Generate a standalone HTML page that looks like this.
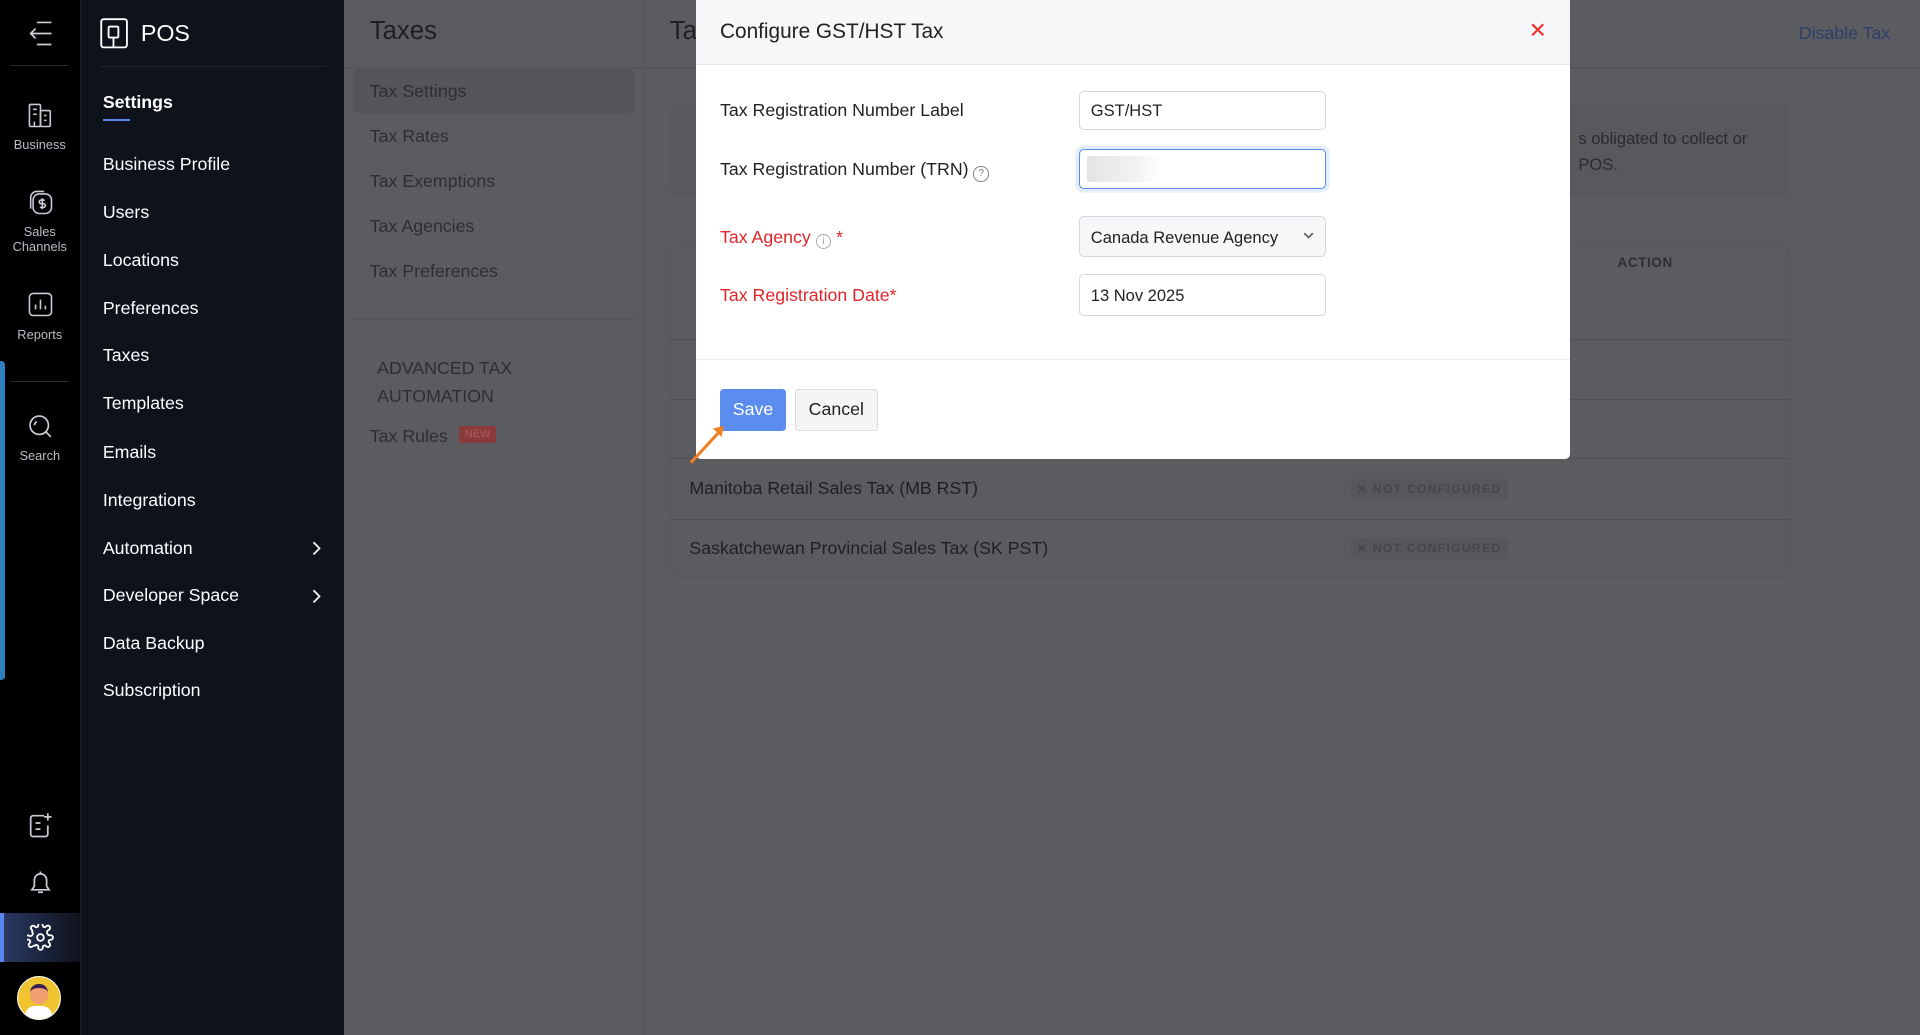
<!DOCTYPE html>
<html><head><meta charset="utf-8">
<style>
html,body{margin:0;padding:0;width:1920px;height:1035px;overflow:hidden;background:#5b5c60;font-family:"Liberation Sans",sans-serif;}
#w{position:absolute;left:0;top:0;width:1568px;height:845px;zoom:1.22449;overflow:hidden;}
.a{position:absolute;}
.rail{left:0;top:0;width:65px;height:845px;background:#000;border-right:1px solid #1b1f28;}
.rail .lbl{position:absolute;width:65px;text-align:center;color:#b8bcc8;font-size:10.5px;line-height:12px;}
.side{left:66px;top:0;width:215px;height:845px;background:#0e121b;}
.side .it{position:absolute;left:18px;color:#fff;font-size:14.5px;}
.main{left:281px;top:0;width:1287px;height:845px;background:#5b5c60;}
.sub{color:#2d2e33;font-size:14.5px;position:absolute;left:21px;}
.modal{left:568px;top:0;width:714px;height:375px;background:#fff;border-radius:0 0 4px 4px;}
.lab{position:absolute;left:20px;font-size:14.5px;color:#222;}
.red{color:#e0252b;}
.inp{position:absolute;left:313px;width:202px;height:32px;border:1px solid #d6d6de;border-radius:4px;box-sizing:border-box;font-size:13.5px;color:#222;padding:8px 9px;}
.row{position:absolute;left:266px;width:915px;height:1px;background:#4f5054;}
.rt{position:absolute;left:282px;font-size:14.5px;color:#1e1f24;}
.nc{position:absolute;left:822px;font-size:10px;font-weight:bold;letter-spacing:1px;color:#45464b;background:#56575b;padding:3px 5px;border-radius:3px;}
</style></head><body><div id="w">
<div class="a rail">
  <svg class="a" style="left:22px;top:16px" width="22" height="22" viewBox="0 0 22 22" fill="none" stroke="#c8ccd6" stroke-width="1.4"><path d="M8 2h12M8 20h12M3 11h17M7 7l-4 4 4 4"/></svg>
  <div class="a" style="left:8px;top:53px;width:48px;height:1px;background:#262a33"></div>
  <svg class="a" style="left:22px;top:83px" width="22" height="22" viewBox="0 0 22 22" fill="none" stroke="#c8ccd6" stroke-width="1.3"><rect x="2" y="2" width="9" height="18" rx="1"/><rect x="11" y="7" width="8" height="13" rx="1"/><path d="M5 6h3M5 10h3M14 11h2M14 15h2M6 20v-4"/></svg>
  <div class="lbl" style="top:113px">Business</div>
  <svg class="a" style="left:22px;top:154px" width="22" height="22" viewBox="0 0 22 22" fill="none" stroke="#c8ccd6" stroke-width="1.3"><rect x="5" y="4" width="15" height="16" rx="5"/><path d="M3 16V7a5 5 0 0 1 5-5h6"/><path d="M14.5 9h-3a1.5 1.5 0 0 0 0 3h2a1.5 1.5 0 0 1 0 3h-3M12.5 7.5v9"/></svg>
  <div class="lbl" style="top:184px">Sales<br>Channels</div>
  <svg class="a" style="left:22px;top:238px" width="22" height="22" viewBox="0 0 22 22" fill="none" stroke="#c8ccd6" stroke-width="1.3"><rect x="2" y="2" width="18" height="18" rx="3"/><path d="M7 15v-4M11 15V7M15 15v-3"/></svg>
  <div class="lbl" style="top:268px">Reports</div>
  <div class="a" style="left:8px;top:311px;width:48px;height:1px;background:#262a33"></div>
  <div class="a" style="left:0;top:295px;width:4px;height:260px;background:#2d7fc0;border-radius:0 3px 3px 0"></div>
  <svg class="a" style="left:22px;top:337px" width="22" height="22" viewBox="0 0 22 22" fill="none" stroke="#c8ccd6" stroke-width="1.4"><circle cx="10" cy="10" r="7.5"/><path d="M15.5 15.5l4 4M6 10a4 4 0 0 1 2-3"/></svg>
  <div class="lbl" style="top:367px">Search</div>
  <svg class="a" style="left:22px;top:663px" width="22" height="22" viewBox="0 0 22 22" fill="none" stroke="#c8ccd6" stroke-width="1.4"><path d="M14 3H5a2 2 0 0 0-2 2v13a2 2 0 0 0 2 2h10a2 2 0 0 0 2-2v-7M7 9h4M7 14h4M17 1v6M14 4h6"/></svg>
  <svg class="a" style="left:22px;top:710px" width="22" height="22" viewBox="0 0 22 22" fill="none" stroke="#c8ccd6" stroke-width="1.4"><path d="M4 17h14l-2-3V9a5 5 0 0 0-10 0v5zM11 2v2M9 19h4"/></svg>
  <div class="a" style="left:0;top:746px;width:65px;height:40px;background:linear-gradient(90deg,#2c3a66,#0e121b)"></div>
  <div class="a" style="left:0;top:746px;width:3px;height:40px;background:#5a84ee"></div>
  <svg class="a" style="left:22px;top:755px" width="22" height="22" viewBox="0 0 24 24" fill="none" stroke="#fff" stroke-width="1.6"><circle cx="12" cy="12" r="3"/><path d="M19.4 15a1.7 1.7 0 0 0 .3 1.8l.1.1a2 2 0 1 1-2.8 2.8l-.1-.1a1.7 1.7 0 0 0-2.9 1.2V21a2 2 0 1 1-4 0v-.1A1.7 1.7 0 0 0 7 19.4a1.7 1.7 0 0 0-1.8.3l-.1.1a2 2 0 1 1-2.8-2.8l.1-.1A1.7 1.7 0 0 0 1.2 14H1a2 2 0 1 1 0-4h.1A1.7 1.7 0 0 0 4.6 7a1.7 1.7 0 0 0-.3-1.8l-.1-.1a2 2 0 1 1 2.8-2.8l.1.1A1.7 1.7 0 0 0 10 1.2V1a2 2 0 1 1 4 0v.1a1.7 1.7 0 0 0 2.9 1.2l.1-.1a2 2 0 1 1 2.8 2.8l-.1.1A1.7 1.7 0 0 0 21 10h.1a2 2 0 1 1 0 4H21a1.7 1.7 0 0 0-1.6 1z"/></svg>
  <div class="a" style="left:14px;top:797px;width:36px;height:36px;border-radius:50%;background:#f0c330;border:1.5px solid #fff;box-sizing:border-box;overflow:hidden">
    <div class="a" style="left:10px;top:6px;width:14px;height:16px;border-radius:7px;background:#f0a070;border-top:4px solid #3a2050;box-sizing:border-box"></div>
    <div class="a" style="left:6px;top:24px;width:22px;height:14px;border-radius:8px 8px 0 0;background:#fff"></div>
  </div>
</div>
<div class="a side">
  <svg class="a" style="left:16px;top:15px" width="25" height="25" viewBox="0 0 25 25" fill="none" stroke="#fff" stroke-width="1.5"><rect x="1" y="1" width="21" height="23" rx="2"/><rect x="7" y="7" width="8" height="9" rx="1"/><path d="M11 16v8"/></svg>
  <div class="a" style="left:49px;top:16px;color:#fff;font-size:19px">POS</div>
  <div class="a" style="left:16px;top:54px;width:184px;height:1px;background:#1f2430"></div>
  <div class="it" style="top:75px;font-weight:bold">Settings</div>
  <div class="a" style="left:18px;top:97px;width:22px;height:2px;background:#5a84ee"></div>
  <div class="it" style="top:126px">Business Profile</div>
  <div class="it" style="top:165px">Users</div>
  <div class="it" style="top:204px">Locations</div>
  <div class="it" style="top:243px">Preferences</div>
  <div class="it" style="top:282px">Taxes</div>
  <div class="it" style="top:321px">Templates</div>
  <div class="it" style="top:361px">Emails</div>
  <div class="it" style="top:400px">Integrations</div>
  <div class="it" style="top:439px">Automation</div>
  <div class="it" style="top:478px">Developer Space</div>
  <div class="it" style="top:517px">Data Backup</div>
  <div class="it" style="top:555px">Subscription</div>
  <svg class="a" style="left:188px;top:442px" width="8" height="12" viewBox="0 0 8 12" fill="none" stroke="#fff" stroke-width="1.4"><path d="M2 1l5 5-5 5"/></svg>
  <svg class="a" style="left:188px;top:481px" width="8" height="12" viewBox="0 0 8 12" fill="none" stroke="#fff" stroke-width="1.4"><path d="M2 1l5 5-5 5"/></svg>
</div>
<div class="a main">
  <div class="a" style="left:0;top:0;width:244px;height:845px;border-right:1px solid #55565a"></div>
  <div class="a" style="left:21px;top:14px;font-size:21px;color:#1e1f24">Taxes</div>
  <div class="a" style="left:266px;top:14px;font-size:21px;color:#1e1f24">Ta</div>
  <div class="a" style="left:0;top:55px;width:1287px;height:1px;background:#55565a"></div>
  <div class="a" style="left:7px;top:56px;width:231px;height:36px;background:#545559;border-radius:5px"></div>
  <div class="sub" style="top:66px">Tax Settings</div>
  <div class="sub" style="top:103px">Tax Rates</div>
  <div class="sub" style="top:140px">Tax Exemptions</div>
  <div class="sub" style="top:176px">Tax Agencies</div>
  <div class="sub" style="top:213px">Tax Preferences</div>
  <div class="a" style="left:7px;top:260px;width:231px;height:1px;background:#55565a"></div>
  <div class="sub" style="left:27px;top:289px;line-height:23px">ADVANCED TAX<br>AUTOMATION</div>
  <div class="sub" style="top:348px">Tax Rules</div>
  <div class="a" style="left:94px;top:348px;width:30px;height:14px;background:#8a3a3c;color:#b05a5c;font-size:9px;text-align:center;line-height:14px">NEW</div>
  <div class="a" style="left:1188px;top:19px;font-size:14.5px;color:#2f3f6a">Disable Tax</div>
  <div class="a" style="left:266px;top:85px;width:915px;height:75px;background:#58595d;border-radius:8px"></div>
  <div class="a" style="left:1008px;top:103px;font-size:13.5px;color:#2a2b30;line-height:21px">s obligated to collect or<br>POS.</div>
  <div class="a" style="left:266px;top:200px;width:915px;height:271px;border:1px solid #55565a;border-radius:8px;box-sizing:border-box"></div>
  <div class="a" style="left:1040px;top:208px;font-size:11px;font-weight:bold;color:#2d2e33;letter-spacing:.5px">ACTION</div>
  <div class="row" style="top:277px"></div>
  <div class="row" style="top:326px"></div>
  <div class="row" style="top:374px"></div>
  <div class="row" style="top:424px"></div>
  <div class="rt" style="top:390px">Manitoba Retail Sales Tax (MB RST)</div>
  <div class="nc" style="top:391px">✕ NOT CONFIGURED</div>
  <div class="rt" style="top:439px">Saskatchewan Provincial Sales Tax (SK PST)</div>
  <div class="nc" style="top:439px">✕ NOT CONFIGURED</div>
</div>
<div class="a modal">
  <div class="a" style="left:0;top:0;width:714px;height:52px;background:#f7f7fa;border-bottom:1px solid #e6e6ea"></div>
  <div class="a" style="left:20px;top:16px;font-size:17px;color:#222">Configure GST/HST Tax</div>
  <svg class="a" style="left:682px;top:19px" width="11" height="11" viewBox="0 0 11 11" stroke="#e8332f" stroke-width="1.8"><path d="M1 1l9 9M10 1l-9 9"/></svg>
  <div class="lab" style="top:82px">Tax Registration Number Label</div>
  <div class="inp" style="top:74px">GST/HST</div>
  <div class="lab" style="top:130px">Tax Registration Number (TRN) <span style="display:inline-block;width:11px;height:11px;border:1px solid #888;border-radius:50%;font-size:8px;text-align:center;line-height:11px;color:#777;vertical-align:-1px">?</span></div>
  <div class="inp" style="top:122px;border:1.5px solid #5b8def;box-shadow:0 0 0 3px #e3edfd"><div style="position:absolute;left:6px;top:5px;width:60px;height:21px;background:linear-gradient(90deg,#e4e4e4,#f0f0f0 60%,#fff)"></div></div>
  <div class="lab red" style="top:185px">Tax Agency <span style="display:inline-block;width:11px;height:11px;border:1px solid #aaa;border-radius:50%;font-size:8px;text-align:center;line-height:11px;color:#999;vertical-align:-1px">i</span> *</div>
  <div class="inp" style="top:176px;background:#f7f7fa;height:34px;padding-top:9px">Canada Revenue Agency<svg style="position:absolute;right:9px;top:13px" width="9" height="6" viewBox="0 0 9 6" fill="none" stroke="#666" stroke-width="1.5"><path d="M1 1l3.5 3.5L8 1"/></svg></div>
  <div class="lab red" style="top:233px">Tax Registration Date*</div>
  <div class="inp" style="top:224px;height:34px;padding-top:9px">13 Nov 2025</div>
  <div class="a" style="left:0;top:293px;width:714px;height:1px;background:#ececf0"></div>
  <div class="a" style="left:20px;top:318px;width:54px;height:34px;background:#5b8def;border-radius:3px;color:#fff;font-size:14.5px;text-align:center;line-height:34px">Save</div>
  <div class="a" style="left:81px;top:318px;width:68px;height:34px;background:#f5f5f5;border:1px solid #ddd;box-sizing:border-box;border-radius:3px;color:#222;font-size:14.5px;text-align:center;line-height:32px">Cancel</div>
</div>
<svg class="a" style="left:560px;top:344px" width="36" height="38" viewBox="0 0 36 38" fill="none" stroke="#f07f22" stroke-width="2.5"><path d="M4 34L28 8"/><path d="M22 6l9-2-2 9z" fill="#f07f22" stroke="none"/></svg>
</div></body></html>
